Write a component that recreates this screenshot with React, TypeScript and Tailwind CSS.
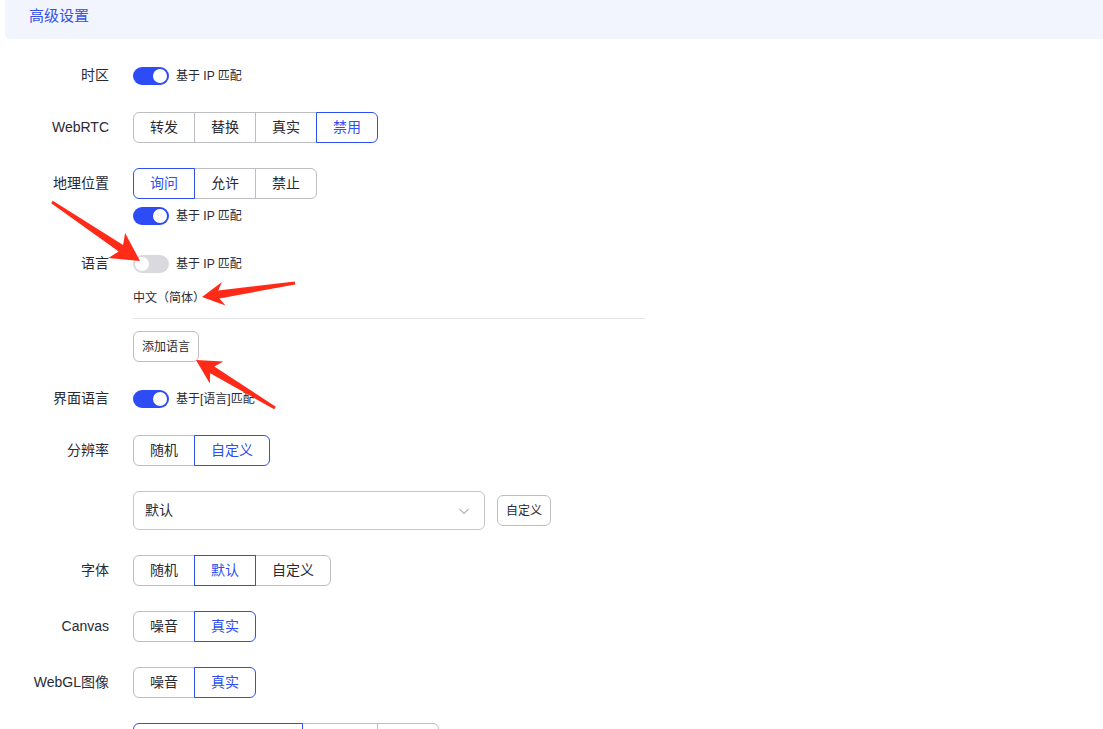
import React from 'react'

const FONT = '"Liberation Sans", "Noto Sans CJK SC", sans-serif'

interface SegProps {
  options: { label: string; w?: string }[]
  active: number
}

function Segmented({ options, active }: SegProps) {
  return (
    <div className="flex h-[31px]">
      {options.map((o, i) => {
        const on = i === active
        const first = i === 0
        const last = i === options.length - 1
        return (
          <button
            key={i}
            className={`relative flex h-[31px] items-center justify-center border px-4 text-[14px] ${o.w ?? ''} ${
              first ? 'rounded-l-[6px]' : '-ml-px'
            } ${last ? 'rounded-r-[6px]' : ''} ${
              on ? 'z-10 border-[#2d4ff5] text-[#2d4ff5]' : 'border-[#bdbdc4] text-[#2a2a33]'
            }`}
          >
            {o.label}
          </button>
        )
      })}
    </div>
  )
}

function Toggle({ on, text }: { on: boolean; text: string }) {
  return (
    <div className="flex h-[18px] items-center">
      <div
        className={`relative h-[18px] w-[36px] rounded-full ${on ? 'bg-[#2d4cf6]' : 'bg-[#dadade]'}`}
      >
        <div
          className={`absolute top-[2px] h-[14px] w-[14px] rounded-full bg-white ${on ? 'left-[20px]' : 'left-[2px]'}`}
        />
      </div>
      <span className="ml-[7px] text-[12px] text-[#2a2a33]">{text}</span>
    </div>
  )
}

function Row({ label, mt, children }: { label: string; mt: string; children: React.ReactNode }) {
  return (
    <div className={`flex ${mt}`}>
      <div className="w-[104px] shrink-0 text-right text-[14px] leading-[31px] text-[#2a2a33]">{label}</div>
      <div className="ml-[24px] flex flex-col">{children}</div>
    </div>
  )
}

function arrow(tx: number, ty: number, hx: number, hy: number, headLen = 24, headHalf = 13) {
  const L = Math.hypot(hx - tx, hy - ty)
  const dx = (hx - tx) / L
  const dy = (hy - ty) / L
  const nx = -dy
  const ny = dx
  const neckHalf = 4
  const tailHalf = 1.5
  const nb = headLen - 5
  const pts = [
    [tx + nx * tailHalf, ty + ny * tailHalf],
    [hx - dx * nb + nx * neckHalf, hy - dy * nb + ny * neckHalf],
    [hx - dx * headLen + nx * headHalf, hy - dy * headLen + ny * headHalf],
    [hx, hy],
    [hx - dx * headLen - nx * headHalf, hy - dy * headLen - ny * headHalf],
    [hx - dx * nb - nx * neckHalf, hy - dy * nb - ny * neckHalf],
    [tx - nx * tailHalf, ty - ny * tailHalf],
  ]
  return pts.map((p) => `${p[0].toFixed(1)},${p[1].toFixed(1)}`).join(' ')
}

export default function App() {
  return (
    <div className="relative h-[729px] w-[1103px] overflow-hidden bg-white" style={{ fontFamily: FONT }}>
      <div className="pl-[5px]">
        {/* section header */}
        <div className="h-[39px] rounded-bl-[5px] bg-[#f2f4fe] pl-[24px] pt-[5px] text-[15px] leading-[22px] text-[#3550ea]">
          高级设置
        </div>

        <Row label="时区" mt="mt-[21px]">
          <div className="flex h-[31px] items-center">
            <Toggle on text="基于 IP 匹配" />
          </div>
        </Row>

        <Row label="WebRTC" mt="mt-[21px]">
          <Segmented options={[{ label: '转发' }, { label: '替换' }, { label: '真实' }, { label: '禁用' }]} active={3} />
        </Row>

        <Row label="地理位置" mt="mt-[25px]">
          <Segmented options={[{ label: '询问' }, { label: '允许' }, { label: '禁止' }]} active={0} />
          <div className="mt-[8px]">
            <Toggle on text="基于 IP 匹配" />
          </div>
        </Row>

        <Row label="语言" mt="mt-[23px]">
          <div className="flex h-[31px] items-center">
            <Toggle on={false} text="基于 IP 匹配" />
          </div>
          <div className="mt-[10px] text-[12px] leading-[18px] text-[#2a2a33]">中文（简体）</div>
          <div className="mt-[11px] h-px w-[512px] bg-[#e4e4e8]" />
          <button className="mt-[12px] h-[31px] w-[66px] rounded-[6px] border border-[#bdbdc4] text-[12px] text-[#2a2a33]">
            添加语言
          </button>
        </Row>

        <Row label="界面语言" mt="mt-[21px]">
          <div className="flex h-[31px] items-center">
            <Toggle on text="基于[语言]匹配" />
          </div>
        </Row>

        <Row label="分辨率" mt="mt-[21px]">
          <Segmented options={[{ label: '随机' }, { label: '自定义' }]} active={1} />
          <div className="mt-[25px] flex items-center">
            <div className="flex h-[39px] w-[352px] items-center justify-between rounded-[6px] border border-[#c4c4ca] pl-[11px] pr-[14px] text-[14px] text-[#2a2a33]">
              <span>默认</span>
              <svg width="12" height="12" viewBox="0 0 12 12" fill="none">
                <path d="M1.5 4l4.5 4.5L10.5 4" stroke="#b4b4ba" strokeWidth="1.2" />
              </svg>
            </div>
            <button className="ml-[12px] h-[31px] w-[54px] rounded-[6px] border border-[#bdbdc4] text-[12px] text-[#2a2a33]">
              自定义
            </button>
          </div>
        </Row>

        <Row label="字体" mt="mt-[25px]">
          <Segmented options={[{ label: '随机' }, { label: '默认' }, { label: '自定义' }]} active={1} />
        </Row>

        <Row label="Canvas" mt="mt-[25px]">
          <Segmented options={[{ label: '噪音' }, { label: '真实' }]} active={1} />
        </Row>

        <Row label="WebGL图像" mt="mt-[25px]">
          <Segmented options={[{ label: '噪音' }, { label: '真实' }]} active={1} />
        </Row>

        {/* next row, only its top edge is in view */}
        <Row label="" mt="mt-[25px]">
          <Segmented
            options={[{ label: '', w: 'w-[170px]' }, { label: '', w: 'w-[76px]' }, { label: '', w: 'w-[62px]' }]}
            active={0}
          />
        </Row>
      </div>

      {/* annotation arrows */}
      <svg className="pointer-events-none absolute left-0 top-0" width="1103" height="729">
        <polygon points={arrow(52, 202, 140, 261, 28, 15)} fill="#ff2a17" />
        <polygon points={arrow(295, 283, 202, 297, 22, 12)} fill="#ff2a17" />
        <polygon points={arrow(275, 408, 196, 360, 24, 13)} fill="#ff2a17" />
      </svg>
    </div>
  )
}
